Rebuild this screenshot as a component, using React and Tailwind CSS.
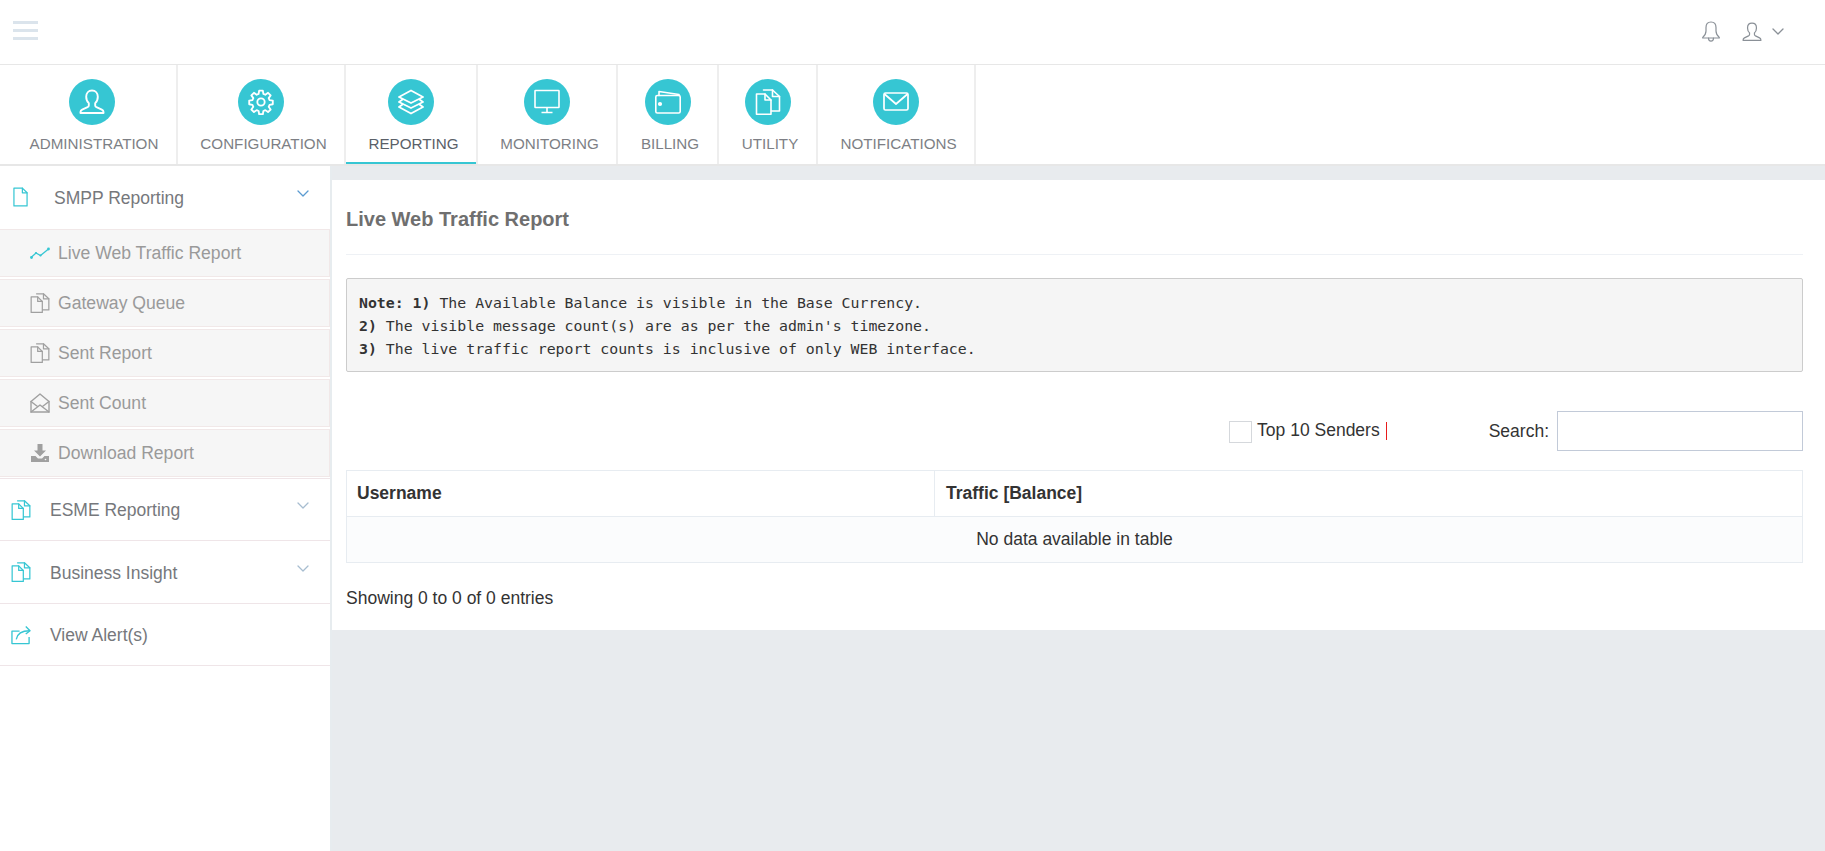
const stroke = { fill: "none", stroke: "currentColor", strokeLinecap: "round", strokeLinejoin: "round" };

const UserIcon = ({ className, sw = 1.9 }) => (
  <svg viewBox="0 0 26 26" className={className} {...stroke} strokeWidth={sw}>
    <path d="M13 1.500c-3.600 0-5.800 2.700-5.800 6.200 0 2.800 1 5 2.600 6.400v2.300c0 .9-.5 1.300-1.300 1.700l-5.300 2.500c-1.300.6-1.700 1.300-1.700 2.400v1h23v-1c0-1.100-.4-1.800-1.700-2.400l-5.300-2.500c-.8-.4-1.300-.8-1.300-1.700v-2.300c1.600-1.400 2.600-3.600 2.600-6.400 0-3.500-2.200-6.200-5.800-6.200z" />
  </svg>
);
const GearIcon = ({ className }) => (
  <svg viewBox="0 0 24 24" className={className} {...stroke} strokeWidth={1.7}>
    <path d="M10.300 1.500h3.400l.5 3 1.800.8 2.500-1.800 2.400 2.400-1.800 2.500.8 1.800 3 .5v3.400l-3 .5-.8 1.800 1.800 2.500-2.400 2.400-2.500-1.800-1.800.8-.5 3h-3.400l-.5-3-1.800-.8-2.500 1.800-2.400-2.400 1.800-2.500-.8-1.800-3-.5v-3.400l3-.5.8-1.800-1.800-2.500 2.400-2.400 2.500 1.800 1.800-.8z" />
    <circle cx="12" cy="12" r="3.400" />
  </svg>
);
const LayersIcon = ({ className }) => (
  <svg viewBox="0 0 26 26" className={className} {...stroke} strokeWidth={1.8}>
    <path d="M13 1.500 25 8 13 14 1 8z" />
    <path d="M4.500 10.500 1 13l12 6 12-6-3.500-2.500" />
    <path d="M4.500 15.500 1 18l12 6.500L25 18l-3.500-2.500" />
  </svg>
);
const ScreenIcon = ({ className }) => (
  <svg viewBox="0 0 26 26" className={className} {...stroke} strokeWidth={1.6} strokeLinecap="butt">
    <rect x="1" y="1.500" width="24" height="17" rx="0.500" />
    <path d="M13 18.500v4.500M7.500 23.500h11" />
  </svg>
);
const WalletIcon = ({ className }) => (
  <svg viewBox="0 0 26 26" className={className} {...stroke} strokeWidth={1.6}>
    <rect x="0.800" y="6.500" width="24.400" height="17.500" rx="1.500" />
    <path d="M4 6.500V2.500L24 5.500v1" />
    <circle cx="5" cy="15" r="1.300" fill="currentColor" />
  </svg>
);
const DocsIcon = ({ className, sw = 1.6 }) => (
  <svg viewBox="0 0 26 26" className={className} {...stroke} strokeWidth={sw}>
    <path d="M1.500 5h8.500l6 6V25.200H1.500z" />
    <path d="M10 5v6h6" />
    <path d="M8.500 1h9l7 6.500V22h-8" />
    <path d="M17.500 1v6.500h7" />
  </svg>
);
const DocIcon = ({ className }) => (
  <svg viewBox="0 0 16 21" className={className} {...stroke} strokeWidth={1.3}>
    <path d="M1 1h9l5 5v14H1z" />
    <path d="M10 1v5h5" />
  </svg>
);
const MailIcon = ({ className }) => (
  <svg viewBox="0 0 26 26" className={className} {...stroke} strokeWidth={1.7}>
    <rect x="1" y="4" width="24" height="17" rx="1.500" />
    <path d="M2 5.500 13 15 24 5.500" />
  </svg>
);
const BellIcon = ({ className }) => (
  <svg viewBox="0 0 18 21" className={className} {...stroke} strokeWidth={1.2}>
    <path d="M9 1c-3.300 0-5 2.500-5 5.500v3.500c0 2.600-1.200 4.600-3.300 6.400v.6h16.600v-.6c-2.100-1.800-3.300-3.800-3.300-6.400V6.500C14 3.500 12.300 1 9 1z" />
    <path d="M6.500 17c0 2 1 3.200 2.500 3.200s2.500-1.200 2.500-3.200" />
  </svg>
);
const Chevron = ({ className }) => (
  <svg viewBox="0 0 12 7" className={className} {...stroke} strokeWidth={1.3}>
    <path d="M1 1l5 5 5-5" />
  </svg>
);
const TrendIcon = ({ className }) => (
  <svg viewBox="0 0 20 12" className={className} fill="none">
    <path d="M1 10.500 6 6l4.500 2.500L18.500 2" stroke="currentColor" strokeWidth="1.300" />
    <circle cx="1.500" cy="10.500" r="1.400" fill="currentColor" />
    <circle cx="6" cy="6" r="1.100" fill="currentColor" />
    <circle cx="10.500" cy="8.500" r="1.100" fill="currentColor" />
    <circle cx="18.500" cy="2" r="1.400" fill="currentColor" />
  </svg>
);
const EnvelopeOpenIcon = ({ className }) => (
  <svg viewBox="0 0 20 20" className={className} {...stroke} strokeWidth={1.4}>
    <path d="M1 8.500 10 1l9 7.500V19H1z" />
    <path d="M1 8.500 7.500 13.500M19 8.500 12.500 13.500M1 19l9-7 9 7" />
  </svg>
);
const DownloadIcon = ({ className }) => (
  <svg viewBox="0 0 20 20" className={className}>
    <path d="M7.500 1h5v6.500H16L10 13.500 4 7.500h3.500z" fill="currentColor" />
    <path d="M1 13h4.500l2.500 2.500h4L14.500 13H19v6H1z" fill="currentColor" />
    <circle cx="15.500" cy="16.500" r="0.800" fill="#f6f6f6" />
  </svg>
);
const ShareIcon = ({ className }) => (
  <svg viewBox="0 0 21 20" className={className} {...stroke} strokeWidth={1.4} strokeLinecap="butt">
    <path d="M9 6H1v13h18v-7" />
    <path d="M5.500 14.500C6.500 9 11 5.500 19.500 5.500" />
    <path d="M15.500 1l4.500 4.500-4.500 3.500" />
  </svg>
);

const tabs = [
  { label: "ADMINISTRATION", w: "w-[178px] pl-[8px]", Icon: UserIcon },
  { label: "CONFIGURATION", w: "w-[168px]", Icon: GearIcon, text: "pl-[5px]" },
  { label: "REPORTING", w: "w-[132px]", Icon: LayersIcon, active: true, text: "pl-[5px]" },
  { label: "MONITORING", w: "w-[140px]", Icon: ScreenIcon, text: "pl-[5px]" },
  { label: "BILLING", w: "w-[101px]", Icon: WalletIcon, text: "pl-[5px]" },
  { label: "UTILITY", w: "w-[99px]", Icon: DocsIcon, text: "pl-[5px]" },
  { label: "NOTIFICATIONS", w: "w-[158px]", Icon: MailIcon, text: "pl-[5px]" },
];

const subItems = [
  { label: "Live Web Traffic Report", Icon: TrendIcon, icon: "w-[20px] h-[12px] text-[#36c6d3]" },
  { label: "Gateway Queue", Icon: DocsIcon, icon: "w-[20px] h-[20px] text-[#a0a0a0]" },
  { label: "Sent Report", Icon: DocsIcon, icon: "w-[20px] h-[20px] text-[#a0a0a0]" },
  { label: "Sent Count", Icon: EnvelopeOpenIcon, icon: "w-[20px] h-[20px] text-[#a0a0a0]" },
  { label: "Download Report", Icon: DownloadIcon, icon: "w-[20px] h-[20px] text-[#a0a0a0]" },
];

const lowerItems = [
  { label: "ESME Reporting", Icon: DocsIcon, chevron: "mt-[2px]", h: "h-[62px]", text: "" },
  { label: "Business Insight", Icon: DocsIcon, chevron: "mt-[3px]", h: "h-[63px]", text: "mt-[1px]" },
  { label: "View Alert(s)", Icon: ShareIcon, h: "h-[62px]", text: "" },
];

export default function App() {
  return (
    <div className="min-h-[851px] flex flex-col bg-white font-['Liberation_Sans',Arial,sans-serif] text-[#333]">
      <header className="h-[65px] flex items-center justify-between border-b border-[#e7e7e7] pl-[13px] pr-[41px]">
        <div className="flex flex-col gap-[5px] w-[25px] -mt-[3px]">
          <span className="block h-[3px] bg-[#dbe4ec]" />
          <span className="block h-[3px] bg-[#dbe4ec]" />
          <span className="block h-[3px] bg-[#dbe4ec]" />
        </div>
        <div className="flex items-center text-[#8a9097] -mt-[1px]">
          <BellIcon className="w-[18px] h-[21px]" />
          <UserIcon className="w-[20px] h-[20px] ml-[22px] mt-[1px]" sw={1.6} />
          <Chevron className="w-[12px] h-[7px] ml-[10px]" />
        </div>
      </header>

      <nav className="h-[101px] flex border-b-2 border-[#e7e7e7]">
        {tabs.map(({ label, w, Icon, active, text }) => (
          <div
            key={label}
            className={`${w} flex flex-col items-center border-r-2 border-[#eeeeee] pt-[14px] ${active ? "relative" : ""}`}
          >
            <div className="w-[46px] h-[46px] rounded-full bg-[#36c6d3] flex items-center justify-center text-white">
              <Icon className="w-[26px] h-[26px]" />
            </div>
            <span className={`mt-[10px] ${text || "pl-[4px]"} text-[15.2px] leading-[18px] whitespace-nowrap ${active ? "text-[#5a6068]" : "text-[#7d7f85]"}`}>
              {label}
            </span>
            {active && <span className="absolute left-0 right-0 bottom-0 h-[2px] bg-[#36c6d3]" />}
          </div>
        ))}
      </nav>

      <div className="flex-1 flex">
        <aside className="w-[332px] shrink-0 border-r-2 border-[#e7ecef] bg-white">
          <div className="h-[63px] flex items-start pl-[13px] pr-[21px] pt-[21px]">
            <DocIcon className="w-[15px] h-[20px] text-[#36c6d3]" />
            <span className="ml-[26px] mt-[1px] text-[17.5px] leading-[20px] text-[#76787c]">SMPP Reporting</span>
            <Chevron className="ml-auto mt-[3px] w-[12px] h-[7px] text-[#5b9bd1]" />
          </div>
          <div>
            {subItems.map(({ label, Icon, icon }) => (
              <div
                key={label}
                className="h-[48px] mb-[2px] last:mb-[1px] flex items-center bg-[#f6f6f6] border border-l-0 border-[#f1e8e8] pl-[30px]"
              >
                <span className="w-[20px] flex justify-center">
                  <Icon className={icon} />
                </span>
                <span className="ml-[8px] text-[17.6px] text-[#9a9a9a] leading-[20px]">{label}</span>
              </div>
            ))}
          </div>
          <div className="border-t border-[#efe5e8]">
            {lowerItems.map(({ label, Icon, chevron, h, text }) => (
              <div key={label} className={`${h} flex items-start border-b border-[#efe5e8] pl-[11px] pr-[21px] pt-[21px]`}>
                <Icon className="w-[20px] h-[20px] text-[#36c6d3]" />
                <span className={`ml-[19px] text-[17.5px] leading-[20px] text-[#76787c] ${text}`}>{label}</span>
                {chevron && <Chevron className={`ml-auto ${chevron} w-[12px] h-[7px] text-[#a7bdd0]`} />}
              </div>
            ))}
          </div>
        </aside>

        <main className="flex-1 min-w-0 bg-[#e8ebee] pt-[14px]">
          <section className="h-[450px] bg-white pl-[14px] pr-[22px]">
            <h1 className="h-[75px] pt-[27px] border-b border-[#eef1f5] text-[20px] leading-[24px] font-bold text-[#6f6f6f]">
              Live Web Traffic Report
            </h1>
            <div className="mt-[23px] h-[94px] bg-[#f5f5f5] border border-[#cccccc] rounded-[2px] px-[12px] pt-[13px] font-['DejaVu_Sans_Mono',monospace] text-[14.85px] leading-[23px] text-[#333] whitespace-pre">
              <div><b>Note: 1)</b> The Available Balance is visible in the Base Currency.</div>
              <div><b>2)</b> The visible message count(s) are as per the admin's timezone.</div>
              <div><b>3)</b> The live traffic report counts is inclusive of only WEB interface.</div>
            </div>

            <div className="mt-[39px] h-[40px] flex items-center justify-end">
              <div className="flex items-center">
                <span className="w-[23px] h-[22px] border border-[#d5d8dc] bg-white mt-[2px]" />
                <span className="ml-[5px] text-[17.5px] leading-[20px] text-[#333] -mt-[3px]">Top 10 Senders</span>
                <span className="ml-[6px] w-[1px] h-[18px] bg-[#e81c1c] -mt-[1px]" />
              </div>
              <label className="ml-[102px] text-[17.5px] leading-[20px] text-[#333]">Search:</label>
              <span className="ml-[8px] w-[246px] h-[40px] border border-[#c2cad8] bg-white" />
            </div>

            <div className="mt-[19px] border border-[#e7ecf1]">
              <div className="h-[46px] flex items-center border-b border-[#e7ecf1] text-[17.5px] font-bold text-[#333]">
                <div className="w-[588px] h-full flex items-center pl-[10px] border-r border-[#e7ecf1]">Username</div>
                <div className="flex-1 pl-[11px]">Traffic [Balance]</div>
              </div>
              <div className="h-[45px] flex items-center justify-center bg-[#fbfcfd] text-[17.5px] text-[#333]">
                No data available in table
              </div>
            </div>

            <div className="mt-[25px] text-[17.5px] leading-[20px] text-[#333]">Showing 0 to 0 of 0 entries</div>
          </section>
        </main>
      </div>
    </div>
  );
}
